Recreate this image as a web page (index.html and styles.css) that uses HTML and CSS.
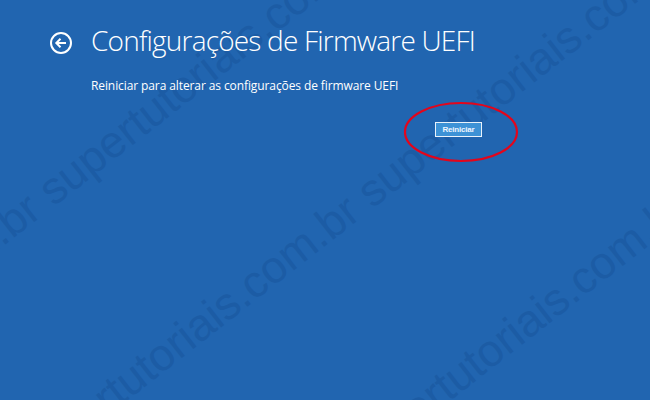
FILE: index.html
```html
<!DOCTYPE html>
<html lang="pt-BR">
<head>
    <meta charset="UTF-8">
    <meta name="viewport" content="width=device-width, initial-scale=1.0">
    <title>Configurações de Firmware UEFI</title>
    <link rel="stylesheet" href="styles.css">
</head>
<body>
    <svg class="watermark" width="650" height="400" viewBox="0 0 650 400" aria-hidden="true">
        <g transform="rotate(-38)">
            <text x="-518" y="196">supertutoriais.com.br supertutoriais.com.br</text>
            <text x="-268" y="394">supertutoriais.com.br supertutoriais.com.br</text>
            <text x="-439" y="593">supertutoriais.com.br supertutoriais.com.br</text>
        </g>
    </svg>

    <div class="page">
        <div class="page-header">
            <button class="back-button" aria-label="Voltar">
                <svg width="24" height="24" viewBox="0 0 24 24">
                    <circle cx="12" cy="12" r="10" fill="none" stroke="#fff" stroke-width="2"/>
                    <path d="M17 12H7.5M11.5 7.8L7.3 12l4.2 4.2" fill="none" stroke="#fff" stroke-width="2"/>
                </svg>
            </button>
            <h1>Configurações de Firmware UEFI</h1>
        </div>

        <div class="content">
            <p class="hint">Reiniciar para alterar as configurações de firmware UEFI</p>
            <div class="actions">
                <span class="restart-wrap">
                    <button class="restart-button">Reiniciar</button>
                    <svg class="highlight" width="118" height="64" viewBox="0 0 118 64" aria-hidden="true">
                        <ellipse cx="59" cy="32" rx="56" ry="29" fill="none" stroke="#e3051b" stroke-width="2.2"/>
                    </svg>
                </span>
            </div>
        </div>
    </div>
</body>
</html>
```

FILE: styles.css
```css
:root {
    --bg-color: #2165b0;
    --mark-color: #1c5ca5;
    --text-color: #fff;
}

body {
    margin: 0;
    width: 650px;
    height: 400px;
    overflow: hidden;
    position: relative;
    background-color: var(--bg-color);
    color: var(--text-color);
    font-family: "Open Sans", "Noto Sans", sans-serif;
}

.watermark {
    position: absolute;
    top: 0;
    left: 0;
    pointer-events: none;
}

.watermark text {
    font-family: "Liberation Sans", Arial, sans-serif;
    font-size: 45px;
    fill: var(--mark-color);
    white-space: pre;
}

.page {
    position: relative;
    padding: 25px 0 0 49px;
}

.page-header {
    display: flex;
    align-items: flex-start;
    gap: 18px;
}

.back-button {
    display: flex;
    margin-top: 6px;
    padding: 0;
    border: none;
    background: none;
    cursor: pointer;
}

h1 {
    margin: 0;
    font-size: 28px;
    font-weight: 300;
    line-height: 30px;
    letter-spacing: -0.8px;
}

.content {
    padding-left: 42px;
}

.hint {
    margin: 23px 0 0;
    font-size: 12px;
    line-height: 16px;
    letter-spacing: -0.1px;
}

.actions {
    display: flex;
    padding: 28px 0 0 344px;
}

.restart-wrap {
    position: relative;
    display: inline-flex;
}

.restart-button {
    width: 47px;
    height: 15px;
    padding: 0;
    border: 1px solid #e9f2fb;
    background-color: #3d92d6;
    color: #eef5ff;
    font-family: "Liberation Sans", Arial, sans-serif;
    font-size: 8px;
    font-weight: bold;
    letter-spacing: -0.2px;
    cursor: pointer;
}

.highlight {
    position: absolute;
    left: -33px;
    top: -22px;
    pointer-events: none;
}
```
